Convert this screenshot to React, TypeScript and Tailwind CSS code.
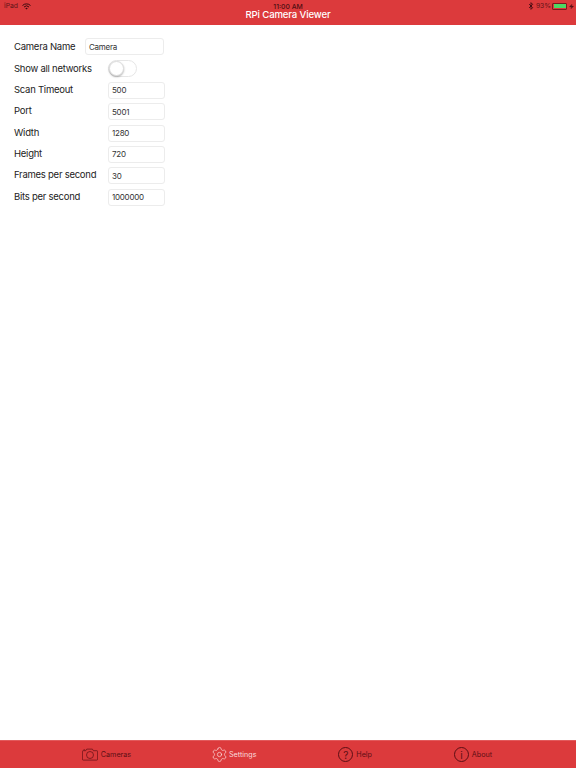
import React from 'react';
import { Bluetooth, Settings, Zap } from 'lucide-react';

const font = "font-['Inter','Liberation_Sans',sans-serif]";

const fields = [
  { label: 'Scan Timeout', value: '500' },
  { label: 'Port', value: '5001' },
  { label: 'Width', value: '1280' },
  { label: 'Height', value: '720' },
  { label: 'Frames per second', value: '30' },
  { label: 'Bits per second', value: '1000000' },
];

const Input = ({ value, width }: { value: string; width: string }) => (
  <div className={`${width} h-[17px] flex items-center pl-[3px] bg-white border border-[#ececec] rounded-[3px] text-[8px] text-[#333]`}>
    {value}
  </div>
);

const CameraIcon = () => (
  <svg width="16" height="13" viewBox="0 0 16 13" fill="none" stroke="currentColor" strokeWidth="0.7">
    <path d="M1.2 2.7h2.6l1-1.6h5.6l1 1.6h3.4a.8.8 0 0 1 .8.8v7.8a.8.8 0 0 1-.8.8H1.2a.8.8 0 0 1-.8-.8V3.5a.8.8 0 0 1 .8-.8z" />
    <circle cx="8" cy="7" r="3.5" />
    <path d="M1.5 1.8h1.6" />
  </svg>
);

const CircleGlyph = ({ glyph }: { glyph: string }) => (
  <div className="w-[15px] h-[15px] rounded-full border border-current flex items-center justify-center text-[10px] leading-none">
    {glyph}
  </div>
);

const Tab = ({ icon, label, active }: { icon: React.ReactNode; label: string; active?: boolean }) => (
  <div className={`flex items-center gap-[3px] ${active ? 'text-[#fbdcdc]' : 'text-[#5c0f14]'}`}>
    {icon}
    <span className="text-[7.2px] mt-[1px]">{label}</span>
  </div>
);

export default function App() {
  return (
    <div className={`${font} w-[576px] h-[768px] flex flex-col bg-white overflow-hidden`}>
      <header className="h-[25px] bg-[#dc3a3c] relative shrink-0">
        <div className="h-[12px] flex items-center justify-between pl-[4px] pr-[2px] text-[6.8px] text-[#5c1418]">
          <div className="flex items-center gap-[4px]">
            <span>iPad</span>
            <svg width="9" height="7" viewBox="0 0 18 14" fill="none" stroke="#3a0a0e" strokeWidth="2">
              <path d="M1 5a11.5 11.5 0 0 1 16 0" />
              <path d="M4 8a7.2 7.2 0 0 1 10 0" />
              <path d="M9 13 6.5 10.6a3.6 3.6 0 0 1 5 0z" fill="#3a0a0e" stroke="none" />
            </svg>
          </div>
          <div className="flex items-center">
            <Bluetooth size={8} strokeWidth={2.5} className="text-[#3a0a0e]" />
            <span className="ml-[0.5px]">93%</span>
            <div className="w-[15px] h-[7px] ml-[1px] rounded-[1px] border-[0.5px] border-[#7a1a1e] p-[0.5px]">
              <div className="w-[12px] h-full bg-[#4cd964]" />
            </div>
            <Zap size={5} fill="currentColor" className="ml-[2px]" />
          </div>
        </div>
        <div className="absolute top-[3.5px] left-0 right-0 text-center text-[6.8px] leading-[6px] font-medium text-[#4a0e12]">11:00 AM</div>
        <div className="absolute top-[9.5px] left-0 right-0 text-center text-[9.6px] tracking-[-0.15px] leading-[9px] font-medium text-white">RPi Camera Viewer</div>
      </header>

      <main className="flex-1 pl-[14px] pt-[13.3px] text-[9.5px] tracking-[-0.25px] text-[#222]">
        <div className="flex items-center h-[17px] mb-[5px]">
          <span className="w-[71px]">Camera Name</span>
          <Input value="Camera" width="w-[79px]" />
        </div>
        <div className="flex items-center h-[17px] mb-[4.5px]">
          <span className="w-[94px]">Show all networks</span>
          <div className="w-[29px] h-[17px] rounded-full border border-[#e6e6e6] bg-white relative">
            <div className="absolute left-0 top-0 w-[15px] h-[15px] rounded-full bg-white border border-[#ddd] shadow-[0_1px_2px_rgba(0,0,0,0.3)]" />
          </div>
        </div>
        <div className="flex flex-col gap-[4.4px]">
          {fields.map((f) => (
            <div key={f.label} className="flex items-center h-[17px]">
              <span className="w-[94px] -mt-[0.5px]">{f.label}</span>
              <Input value={f.value} width="w-[57px]" />
            </div>
          ))}
        </div>
      </main>

      <footer className="h-[28px] bg-[#dc3a3c] border-t border-[#e25a5c] pr-[2px] shrink-0 flex items-center justify-evenly">
        <Tab icon={<CameraIcon />} label="Cameras" />
        <Tab icon={<Settings size={17} strokeWidth={1} className="-ml-[2px] -mr-[2px]" />} label="Settings" active />
        <Tab icon={<CircleGlyph glyph="?" />} label="Help" />
        <Tab icon={<CircleGlyph glyph="i" />} label="About" />
      </footer>
    </div>
  );
}
